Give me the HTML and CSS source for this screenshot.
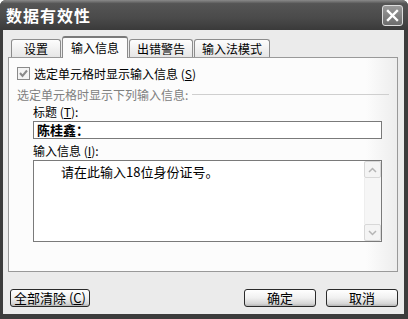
FILE: index.html
```html
<html>

<head>
    <link rel="stylesheet" href="styles.css">
</head>

<body>

    <div class="window">
        <div class="titlebar">
            <span class="title">数据有效性</span>
            <button class="close">
                <svg width="13" height="13" viewBox="0 0 13 13">
                    <path d="M2 2 L11 11 M11 2 L2 11" stroke="#fff" stroke-width="2.4" stroke-linecap="square"/>
                </svg>
            </button>
        </div>

        <div class="client">
            <div class="tabs">
                <div class="tab first">设置</div>
                <div class="tab active">输入信息</div>
                <div class="tab">出错警告</div>
                <div class="tab">输入法模式</div>
            </div>

            <div class="panel">
                <label class="check-row">
                    <span class="checkbox">
                        <svg width="11" height="11" viewBox="0 0 11 11">
                            <path d="M2 5 L4.5 8 L9 2.5" fill="none" stroke="#8a8a8a" stroke-width="2"/>
                        </svg>
                    </span>
                    <span>选定单元格时显示输入信息 (<u>S</u>)</span>
                </label>

                <div class="group-label">
                    <span>选定单元格时显示下列输入信息:</span>
                    <span class="rule"></span>
                </div>

                <div class="fields">
                    <div class="field-label">标题 (<u>T</u>):</div>
                    <div class="textbox">陈桂鑫：</div>

                    <div class="field-label">输入信息 (<u>I</u>):</div>
                    <div class="textarea">
                        <div class="textarea-text">请在此输入18位身份证号。</div>
                        <div class="scrollbar">
                            <div class="arrow">
                                <svg width="9" height="6" viewBox="0 0 9 6">
                                    <path d="M1 5 L4.5 1.5 L8 5" fill="none" stroke="#b5b5b5" stroke-width="1.5"/>
                                </svg>
                            </div>
                            <div class="track"></div>
                            <div class="arrow">
                                <svg width="9" height="6" viewBox="0 0 9 6">
                                    <path d="M1 1 L4.5 4.5 L8 1" fill="none" stroke="#b5b5b5" stroke-width="1.5"/>
                                </svg>
                            </div>
                        </div>
                    </div>
                </div>
            </div>

            <div class="footer">
                <button class="button clear-all">全部清除 (<u>C</u>)</button>
                <div class="footer-right">
                    <button class="button">确定</button>
                    <button class="button">取消</button>
                </div>
            </div>
        </div>
    </div>

</body>

</html>
```

FILE: styles.css
```css
body {
    margin: 0;
    font-family: "Noto Sans CJK SC", "DejaVu Sans", sans-serif;
    font-size: 12px;
    color: #000;
    background: #fff;
}

.window {
    width: 408px;
    height: 319px;
    box-sizing: border-box;
    display: flex;
    flex-direction: column;
    background: #3c3c3c;
    border-radius: 6px 6px 0 0;
    overflow: hidden;
}

.titlebar {
    height: 30px;
    display: flex;
    align-items: center;
    justify-content: space-between;
    padding: 0 5px 0 6px;
    background: linear-gradient(#8a8a8a, #555 12%, #4a4a4a 60%, #3a3a3a);
}

.title {
    color: #fff;
    font-size: 16px;
    font-weight: bold;
    letter-spacing: 1px;
}

.close {
    width: 21px;
    height: 21px;
    padding: 0;
    display: flex;
    align-items: center;
    justify-content: center;
    border: 1px solid #ddd;
    border-radius: 3px;
    background: linear-gradient(#9a9a9a, #6c6c6c);
}

.client {
    flex: 1;
    margin: 0 4px 5px 3px;
    background: #ebebeb;
    display: flex;
    flex-direction: column;
    padding: 6px 6px 0 5px;
}

.tabs {
    display: flex;
    gap: 1px;
    padding-left: 3px;
    height: 21px;
    align-items: flex-end;
    position: relative;
    z-index: 1;
}

.tab {
    height: 17px;
    line-height: 17px;
    padding: 0 7px;
    border: 1px solid #8c8c8c;
    border-bottom: none;
    border-radius: 3px 3px 0 0;
    background: linear-gradient(#fdfdfd, #e6e6e6);
    font-size: 12px;
}

.tab.first {
    width: 48px;
    padding: 0;
    text-align: center;
}

.tab.active {
    background: #fcfcfc;
    border-top: 2px solid #7a7a7a;
    height: 20px;
    line-height: 20px;
    margin-bottom: -1px;
    padding: 0 8px;
}

.panel {
    height: 215px;
    box-sizing: border-box;
    border: 1px solid #999;
    background: linear-gradient(90deg, #fcfcfc 92%, #ededed);
    padding: 8px 0 0 8px;
}

.check-row {
    display: flex;
    align-items: center;
    gap: 4px;
    height: 14px;
}

.checkbox {
    width: 11px;
    height: 11px;
    border: 1px solid #8a8a8a;
    background: #f4f4f4;
    display: flex;
    align-items: center;
    justify-content: center;
}

.group-label {
    display: flex;
    align-items: center;
    gap: 4px;
    color: #808080;
    margin-top: 6px;
    padding-right: 8px;
    height: 16px;
}

.rule {
    flex: 1;
    border-top: 1px solid #cfcfcf;
}

.fields {
    padding-left: 16px;
    width: 349px;
}

.field-label {
    height: 16px;
    line-height: 16px;
    margin-top: 2px;
}

.textbox {
    height: 18px;
    box-sizing: border-box;
    border: 1px solid #7a7a7a;
    background: #fff;
    line-height: 16px;
    padding-left: 3px;
    font-weight: bold;
    font-size: 13px;
    margin-top: 1px;
    margin-bottom: 4px;
}

.textarea {
    height: 82px;
    box-sizing: border-box;
    border: 1px solid #7a7a7a;
    background: #fff;
    margin-top: 1px;
    display: flex;
}

.textarea-text {
    flex: 1;
    padding: 1px 0 0 27px;
    font-size: 13px;
}

.scrollbar {
    width: 17px;
    display: flex;
    flex-direction: column;
    background: #f6f6f6;
}

.arrow {
    height: 15px;
    border: 1px solid #d8d8d8;
    border-radius: 2px;
    background: #f4f4f4;
    display: flex;
    align-items: center;
    justify-content: center;
}

.track {
    flex: 1;
    border-left: 1px solid #eee;
}

.footer {
    flex: 1;
    display: flex;
    justify-content: space-between;
    align-items: flex-start;
    padding: 17px 0 0 2px;
}

.footer-right {
    display: flex;
    gap: 10px;
}

.button {
    height: 18px;
    width: 72px;
    padding: 0;
    font-family: "Noto Sans CJK SC", "DejaVu Sans", sans-serif;
    font-size: 13px;
    line-height: 14px;
    border: 1px solid #2a2a2a;
    border-radius: 3px;
    background: linear-gradient(#ffffff, #f0f0f0 50%, #d6d6d6 85%, #b5b5b5);
    color: #000;
}

.button.clear-all {
    width: 80px;
}

u {
    text-decoration: underline;
}
```
